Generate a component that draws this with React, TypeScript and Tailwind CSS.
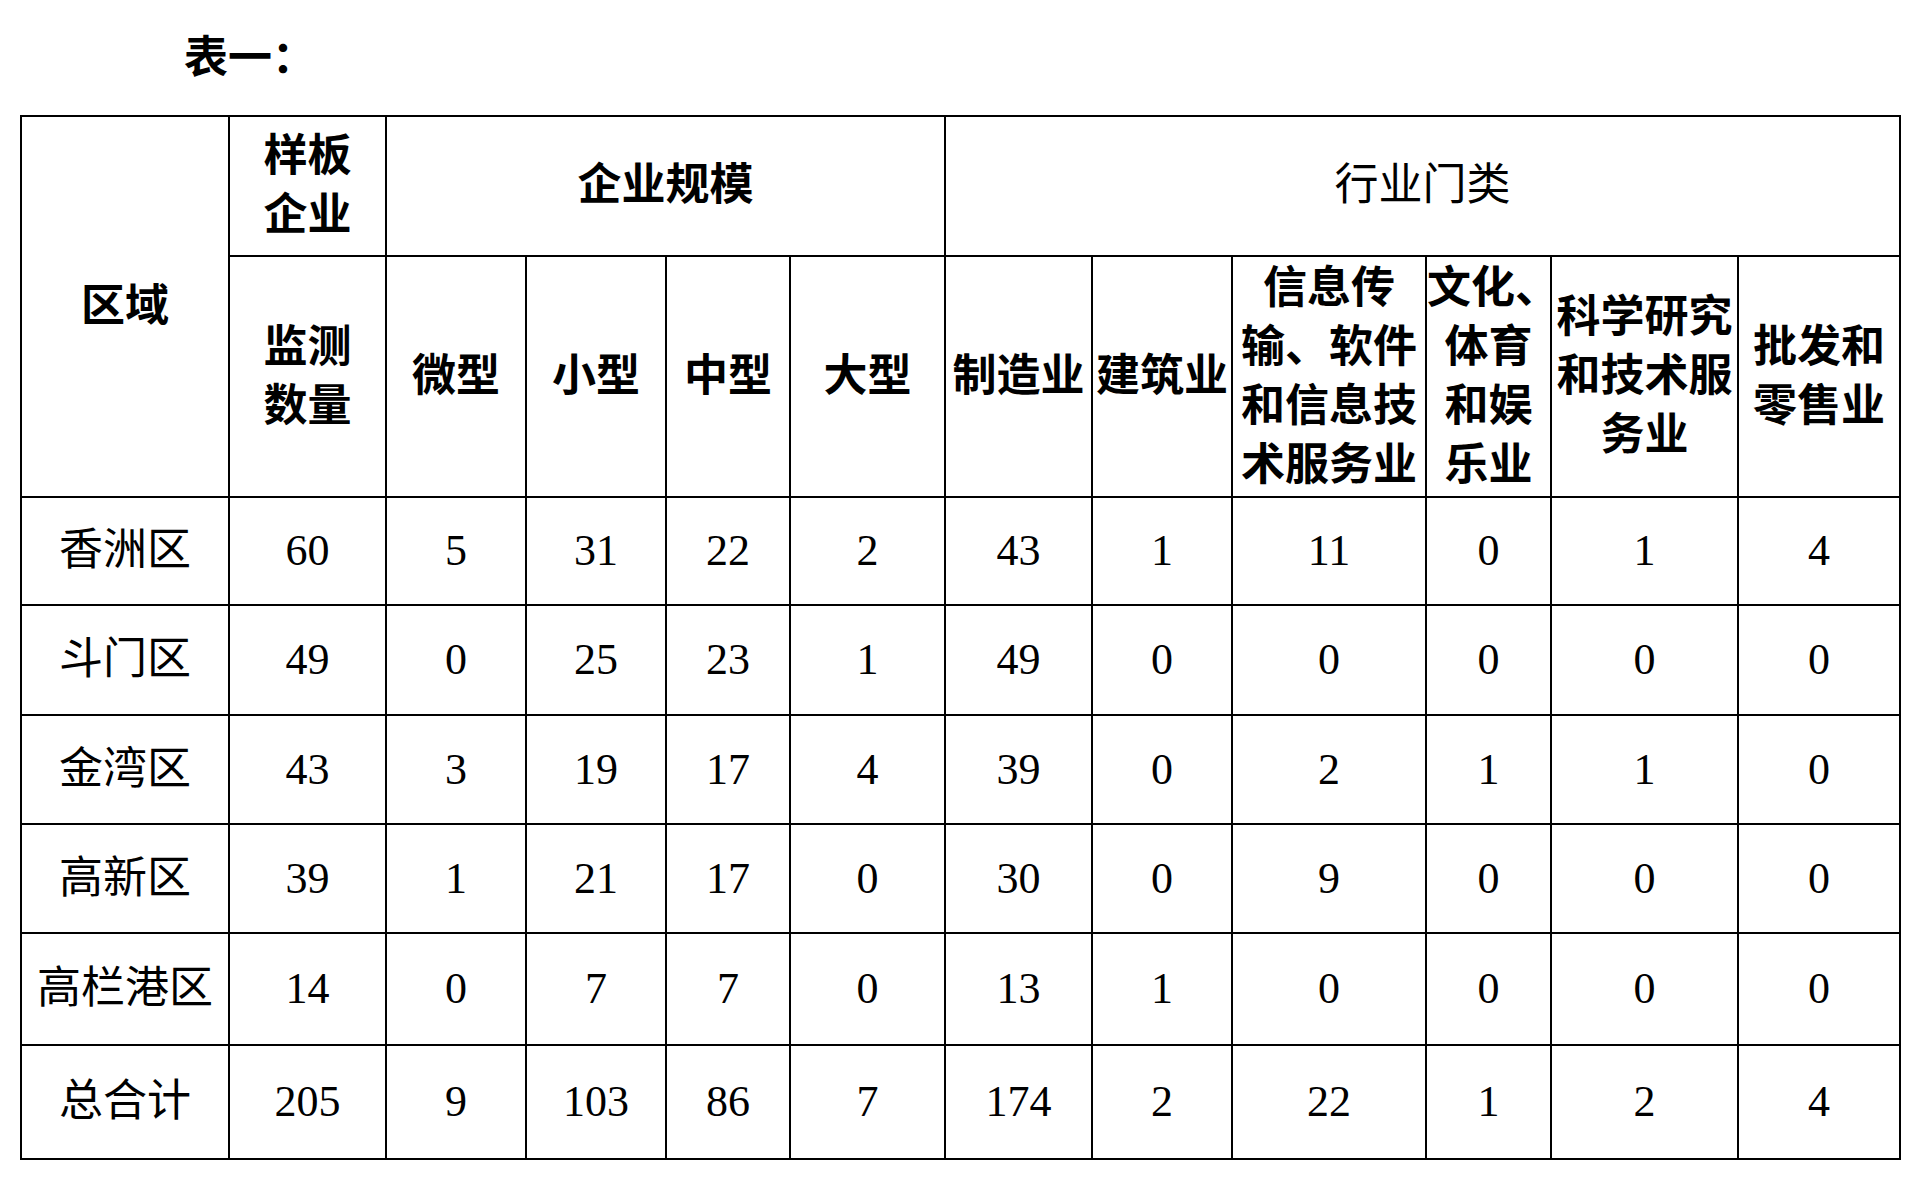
import React from "react";

const colWidths = [
    "w-[208px]", "w-[157px]", "w-[140px]", "w-[140px]", "w-[124px]", "w-[155px]",
    "w-[147px]", "w-[140px]", "w-[194px]", "w-[125px]", "w-[187px]", "w-[162px]",
];

const rows = [
    { name: "香洲区", h: "h-[108px]", v: [60, 5, 31, 22, 2, 43, 1, 11, 0, 1, 4] },
    { name: "斗门区", h: "h-[110px]", v: [49, 0, 25, 23, 1, 49, 0, 0, 0, 0, 0] },
    { name: "金湾区", h: "h-[109px]", v: [43, 3, 19, 17, 4, 39, 0, 2, 1, 1, 0] },
    { name: "高新区", h: "h-[109px]", v: [39, 1, 21, 17, 0, 30, 0, 9, 0, 0, 0] },
    { name: "高栏港区", h: "h-[112px]", v: [14, 0, 7, 7, 0, 13, 1, 0, 0, 0, 0] },
    { name: "总合计", h: "h-[114px]", v: [205, 9, 103, 86, 7, 174, 2, 22, 1, 2, 4] },
];

const subHeads: string[][] = [
    ["微型"],
    ["小型"],
    ["中型"],
    ["大型"],
    ["制造业"],
    ["建筑业"],
    ["信息传", "输、软件", "和信息技", "术服务业"],
    ["文化、", "体育", "和娱", "乐业"],
    ["科学研究", "和技术服", "务业"],
    ["批发和", "零售业"],
];

const cell = "border-2 border-black p-0 text-center align-middle whitespace-nowrap";

const Lines = ({ lines }: { lines: string[] }) => (
    <div className="leading-[59px]">
        {lines.map((l, i) => (
            <div key={i}>{l}</div>
        ))}
    </div>
);

export default function App() {
    return (
        <div className="min-h-[1198px] w-[1920px] bg-white text-black font-['Liberation_Serif','Noto_Sans_CJK_SC',serif] text-[44px]">
            <div className="pt-[37px] pl-[184px] leading-[44px] font-bold">表一：</div>

            <table className="mt-[34px] ml-[20px] table-fixed border-collapse border-2 border-black w-[1879px]">
                <colgroup>
                    {colWidths.map((w, i) => (
                        <col key={i} className={w} />
                    ))}
                </colgroup>
                <thead>
                    <tr className="h-[140px]">
                        <th rowSpan={2} className={`${cell} font-bold`}>区域</th>
                        <th className={`${cell} font-bold`}>
                            <Lines lines={["样板", "企业"]} />
                        </th>
                        <th colSpan={4} className={`${cell} font-bold`}>企业规模</th>
                        <th colSpan={6} className={`${cell} font-normal`}>行业门类</th>
                    </tr>
                    <tr className="h-[241px]">
                        <th className={`${cell} font-bold`}>
                            <Lines lines={["监测", "数量"]} />
                        </th>
                        {subHeads.map((lines, i) => (
                            <th key={i} className={`${cell} font-bold`}>
                                <Lines lines={lines} />
                            </th>
                        ))}
                    </tr>
                </thead>
                <tbody>
                    {rows.map((r) => (
                        <tr key={r.name} className={r.h}>
                            <td className={cell}>{r.name}</td>
                            {r.v.map((n, i) => (
                                <td key={i} className={cell}>{n}</td>
                            ))}
                        </tr>
                    ))}
                </tbody>
            </table>
        </div>
    );
}
